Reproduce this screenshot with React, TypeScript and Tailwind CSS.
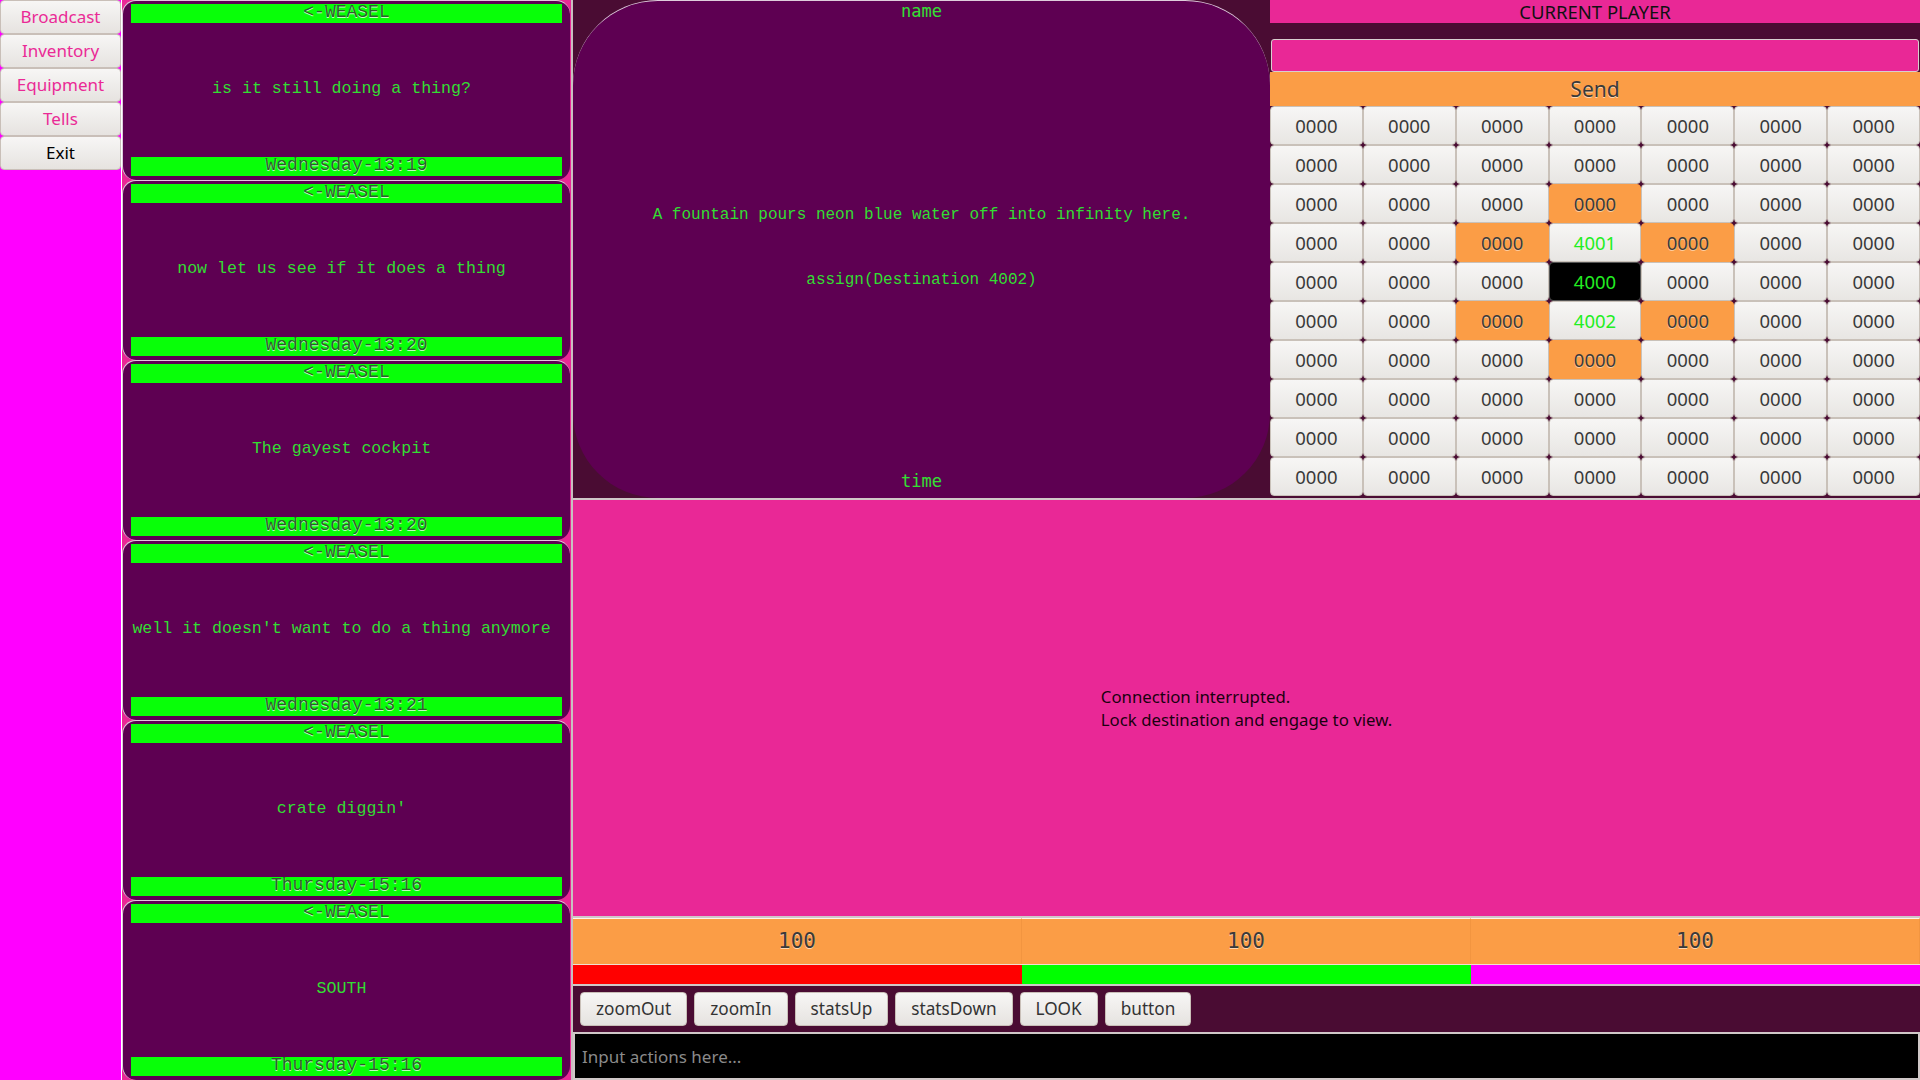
import React from "react";

const UI = "font-['Noto_Sans',sans-serif]";
const COURIER = "font-['Liberation_Mono',monospace]";
const DJMONO = "font-['DejaVu_Sans_Mono',monospace]";

const navItems = [
    { label: "Broadcast", pink: true },
    { label: "Inventory", pink: true },
    { label: "Equipment", pink: true },
    { label: "Tells", pink: true },
    { label: "Exit", pink: false },
];

const messages = [
    { from: "<-WEASEL", text: "is it still doing a thing?", at: "Wednesday-13:19" },
    { from: "<-WEASEL", text: "now let us see if it does a thing", at: "Wednesday-13:20" },
    { from: "<-WEASEL", text: "The gayest cockpit", at: "Wednesday-13:20" },
    { from: "<-WEASEL", text: "well it doesn't want to do a thing anymore", at: "Wednesday-13:21" },
    { from: "<-WEASEL", text: "crate diggin'", at: "Thursday-15:16" },
    { from: "<-WEASEL", text: "SOUTH", at: "Thursday-15:16" },
];

// which map cells are special: key = "row-col"
const special: Record<string, { kind: "orange" | "here" | "exit"; label: string }> = {
    "2-3": { kind: "orange", label: "0000" },
    "3-2": { kind: "orange", label: "0000" },
    "3-3": { kind: "exit", label: "4001" },
    "3-4": { kind: "orange", label: "0000" },
    "4-3": { kind: "here", label: "4000" },
    "5-2": { kind: "orange", label: "0000" },
    "5-3": { kind: "exit", label: "4002" },
    "5-4": { kind: "orange", label: "0000" },
    "6-3": { kind: "orange", label: "0000" },
};

const actionButtons = ["zoomOut", "zoomIn", "statsUp", "statsDown", "LOOK", "button"];

const MessageCard = ({ from, text, at }: { from: string; text: string; at: string }) => (
    <div className="h-[180px] shrink-0 mr-[1px] flex flex-col rounded-[14px] bg-[#5e0052] border-t border-l border-white/80">
        <div className={`mx-[8px] mt-[3px] h-[19px] bg-[#08ff08] text-center text-[18px] leading-[16px] text-[#2c5e2c] [text-shadow:0_1px_0_rgba(255,255,255,0.75)] ${COURIER}`}>
            {from}
        </div>
        <div className={`flex-1 flex items-center justify-center pr-[10px] pb-[2px] text-[16.6px] text-[#33dd33] ${COURIER}`}>
            {text}
        </div>
        <div className={`mx-[8px] mb-[4px] h-[19px] bg-[#08ff08] text-center text-[18px] leading-[16px] text-[#2c5e2c] [text-shadow:0_1px_0_rgba(255,255,255,0.75)] ${COURIER}`}>
            {at}
        </div>
    </div>
);

const MapCell = ({ row, col }: { row: number; col: number }) => {
    const s = special[`${row}-${col}`];
    let cls = "bg-gradient-to-b from-[#f7f6f5] to-[#e8e6e3] text-[#3a3a3a] border-[#c9c1b9]";
    if (s?.kind === "orange") cls = "bg-[#fb9d46] text-[#3a3a3a] border-[#fb9d46] [text-shadow:0_1px_0_rgba(255,255,255,0.5)]";
    if (s?.kind === "here") cls = "bg-black text-[#22ee22] border-[#555]";
    if (s?.kind === "exit") cls = "bg-gradient-to-b from-[#f7f6f5] to-[#e8e6e3] text-[#22ee22] border-[#c9c1b9]";
    return (
        <div className={`h-[39px] flex items-center justify-center pt-[1px] rounded-[4px] border text-[18.5px] ${UI} ${cls}`}>
            {s ? s.label : "0000"}
        </div>
    );
};

export default function App() {
    return (
        <div className="w-[1920px] h-[1080px] flex overflow-hidden bg-[#4a0c33]">
            {/* nav */}
            <div className="w-[121px] shrink-0 bg-[#ff00ff] flex flex-col">
                {navItems.map((n) => (
                    <button
                        key={n.label}
                        className={`h-[34px] w-full rounded-[4px] border border-[#c9bfb8] bg-gradient-to-b from-[#f7f6f5] to-[#e6e3e0] text-[17px] ${UI} ${n.pink ? "text-[#ea2a96]" : "text-black"}`}
                    >
                        {n.label}
                    </button>
                ))}
            </div>

            {/* tells column */}
            <div className="w-[450px] shrink-0 bg-[#e92896] border-l border-white flex flex-col">
                {messages.map((m, i) => (
                    <MessageCard key={i} {...m} />
                ))}
            </div>

            {/* main area */}
            <div className="flex-1 flex flex-col border-l-2 border-[#c8c0c0]">
                <div className="h-[498px] shrink-0 flex">
                    {/* room */}
                    <div className="w-[697px] shrink-0 bg-[#4a0c33]">
                        <div className="h-full rounded-[85px] bg-[#5e0052] border-t border-white/80 flex flex-col items-center">
                            <div className={`mt-[0px] text-[17px] leading-[20px] text-[#33e033] ${DJMONO}`}>name</div>
                            <div className={`mt-[182px] text-[16px] text-[#33dd33] ${COURIER}`}>
                                A fountain pours neon blue water off into infinity here.
                            </div>
                            <div className={`mt-[41px] text-[16px] text-[#33dd33] ${COURIER}`}>assign(Destination 4002)</div>
                            <div className={`mt-auto mb-[7px] text-[17px] leading-[20px] text-[#33e033] ${DJMONO}`}>time</div>
                        </div>
                    </div>

                    {/* player + map */}
                    <div className="flex-1 flex flex-col bg-[#4a0c33]">
                        <div className={`h-[23px] bg-[#e92896] text-center text-[18.5px] leading-[24px] text-[#111] ${UI}`}>
                            CURRENT PLAYER
                        </div>
                        <div className="h-[16px]" />
                        <div className="h-[33px] mx-[1px] rounded-[3px] border border-[#d8cfcf] bg-[#e92896]" />
                        <div className={`h-[34px] bg-[#fb9d46] text-center text-[21px] leading-[34px] text-[#3a3a3a] [text-shadow:0_1px_0_rgba(255,255,255,0.6)] ${UI}`}>
                            Send
                        </div>
                        <div className="grid grid-cols-7">
                            {Array.from({ length: 10 }).map((_, r) =>
                                Array.from({ length: 7 }).map((_, c) => <MapCell key={`${r}-${c}`} row={r} col={c} />)
                            )}
                        </div>
                    </div>
                </div>

                {/* view */}
                <div className="flex-1 bg-[#e92896] border-t-2 border-[#d0c8c8] flex items-center justify-center">
                    <div className={`text-left text-[16.8px] leading-[23px] text-[#1a0010] ${UI}`}>
                        Connection interrupted.
                        <br />
                        Lock destination and engage to view.
                    </div>
                </div>

                {/* stats */}
                <div className="h-[48px] shrink-0 border-t-2 border-[#d0c8c8] flex">
                    {[0, 1, 2].map((i) => (
                        <div
                            key={i}
                            className={`flex-1 bg-[#fb9d46] border-t border-white/90 border-r border-r-[#f29540] flex items-center justify-center text-[21px] text-[#3a3a3a] [text-shadow:0_1px_0_rgba(255,255,255,0.6)] ${DJMONO}`}
                        >
                            100
                        </div>
                    ))}
                </div>
                <div className="h-[20px] shrink-0 flex border-t border-[#f0e0d0]">
                    <div className="flex-1 bg-[#ff0000]" />
                    <div className="flex-1 bg-[#00ff00]" />
                    <div className="flex-1 bg-[#ff00ff]" />
                </div>

                {/* actions */}
                <div className="h-[48px] shrink-0 bg-[#4a0c33] border-t-2 border-[#d0c8c8] flex items-center gap-[7px] px-[7px]">
                    {actionButtons.map((b) => (
                        <button
                            key={b}
                            className={`h-[34px] px-[15px] rounded-[4px] border border-[#c9bfb8] bg-gradient-to-b from-[#f7f6f5] to-[#e6e3e0] text-[17.2px] text-[#333] ${UI}`}
                        >
                            {b}
                        </button>
                    ))}
                </div>
                <div className="h-[48px] shrink-0 border-2 border-[#d0c8c8] bg-black">
                    <input
                        placeholder="Input actions here..."
                        className={`w-full h-full bg-black px-[7px] text-[17px] text-white placeholder:text-[#8a8a8a] outline-none ${UI}`}
                    />
                </div>
            </div>
        </div>
    );
}
